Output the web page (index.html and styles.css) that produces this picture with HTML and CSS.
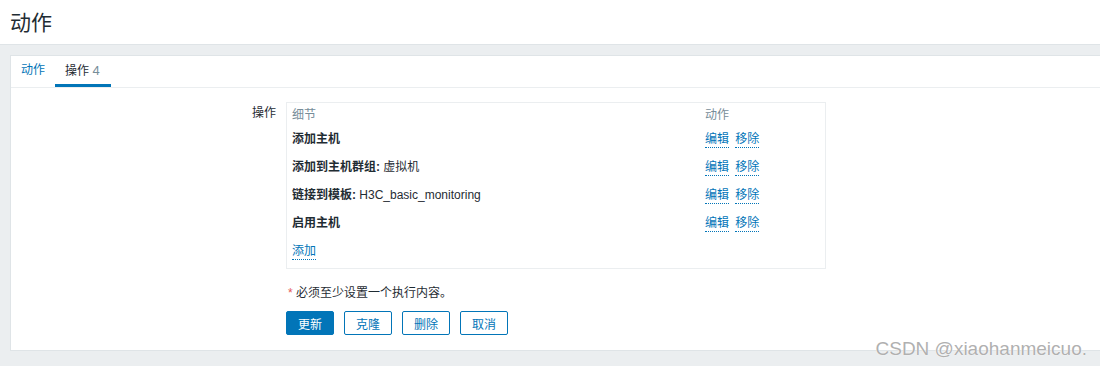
FILE: index.html
```html
<!DOCTYPE html>
<html lang="zh">
<head>
<meta charset="utf-8">
<title>动作</title>
<link rel="stylesheet" href="styles.css">
</head>
<body>
<header class="page-header">
  <h1 class="page-title">动作</h1>
</header>
<main class="content">
  <section class="card">
    <ul class="tabs">
      <li class="tab"><a class="tab-link">动作</a></li>
      <li class="tab tab-active"><span>操作</span> <span class="tab-count">4</span></li>
    </ul>
    <div class="form">
      <div class="form-label">操作</div>
      <div class="form-field">
        <div class="ops-table">
          <div class="ops-head">
            <span>细节</span>
            <span>动作</span>
          </div>
          <div class="ops-row">
            <span class="ops-detail"><b>添加主机</b></span>
            <span class="ops-actions"><a class="link">编辑</a> <a class="link">移除</a></span>
          </div>
          <div class="ops-row">
            <span class="ops-detail"><b>添加到主机群组:</b> 虚拟机</span>
            <span class="ops-actions"><a class="link">编辑</a> <a class="link">移除</a></span>
          </div>
          <div class="ops-row">
            <span class="ops-detail"><b>链接到模板:</b> H3C_basic_monitoring</span>
            <span class="ops-actions"><a class="link">编辑</a> <a class="link">移除</a></span>
          </div>
          <div class="ops-row">
            <span class="ops-detail"><b>启用主机</b></span>
            <span class="ops-actions"><a class="link">编辑</a> <a class="link">移除</a></span>
          </div>
          <div class="ops-row">
            <span class="ops-detail"><a class="link">添加</a></span>
          </div>
        </div>
      </div>
      <div class="form-field form-note"><span class="req">*</span> 必须至少设置一个执行内容。</div>
      <div class="form-field form-buttons">
        <button class="btn btn-primary">更新</button>
        <button class="btn">克隆</button>
        <button class="btn">删除</button>
        <button class="btn">取消</button>
      </div>
    </div>
  </section>
</main>
<div class="watermark">CSDN @xiaohanmeicuo.</div>
</body>
</html>
```
FILE: styles.css
```css
* { box-sizing: border-box; }
html, body { margin: 0; padding: 0; }
body {
  width: 1100px;
  height: 366px;
  overflow: hidden;
  background: #ebeef0;
  font-family: "Liberation Sans", Arial, "Noto Sans CJK SC", sans-serif;
  font-size: 12px;
  color: #1f2c33;
  position: relative;
}
.page-header {
  background: #fff;
  height: 45px;
  border-bottom: 1px solid #dfe4e7;
  padding: 0 10px;
}
.page-title {
  margin: 0;
  font-weight: normal;
  font-size: 21px;
  line-height: 42px;
  font-family: "Noto Sans CJK SC", sans-serif;
  color: #1f2c33;
}
.content {
  padding: 10px 0 0 10px;
}
.card {
  background: #fff;
  border: 1px solid #dfe4e7;
  border-right: none;
  height: 296px;
  margin-right: -10px;
}
.tabs {
  list-style: none;
  margin: 0;
  padding: 0;
  display: flex;
  height: 32px;
  border-bottom: 1px solid #ebeef0;
}
.tab {
  padding: 0 10px;
  height: 31px;
  line-height: 29px;
  color: #0275b8;
}
.tab-link { color: #0275b8; }
.tab-active {
  color: #1f2c33;
  border-bottom: 3px solid #0275b8;
  padding-right: 11px;
}
.tab-count { color: #768d99; font-size: 13px; }
.form {
  display: grid;
  grid-template-columns: 265px 540px;
  column-gap: 10px;
  padding-top: 14px;
}
.form-label {
  text-align: right;
  padding-top: 4px;
  line-height: 14px;
}
.form-field { grid-column: 2; }
.ops-table {
  border: 1px solid #ebeef0;
  padding: 5px 5px 3px 5px;
}
.ops-head, .ops-row {
  display: grid;
  grid-template-columns: 413px auto;
}
.ops-head {
  line-height: 14px;
  color: #768d99;
  margin-bottom: 3px;
}
.ops-row {
  height: 28px;
  line-height: 28px;
}
.ops-detail b { font-weight: bold; }
.ops-actions { word-spacing: 3px; }
.link {
  color: #0275b8;
  text-decoration: none;
  border-bottom: 1px dotted #0275b8;
  padding-bottom: 1px;
  word-spacing: 0;
}
.form-note {
  margin-top: 17px;
  line-height: 14px;
  padding-left: 2px;
}
.req { color: #e45959; }
.form-buttons {
  margin-top: 11px;
  display: flex;
  gap: 10px;
}
.btn {
  height: 24px;
  padding: 0 11px;
  font-family: "Liberation Sans", Arial, "Noto Sans CJK SC", sans-serif;
  font-size: 12px;
  background: #fff;
  color: #0275b8;
  border: 1px solid #0275b8;
  border-radius: 2px;
  cursor: pointer;
}
.btn-primary {
  background: #0275b8;
  color: #fff;
}
.watermark {
  position: absolute;
  right: 13px;
  bottom: 6px;
  font-family: "Liberation Sans", Arial, sans-serif;
  font-size: 19px;
  line-height: 22px;
  color: #b0b0b0;
  text-shadow: 0 0 1px #fff, 0 0 1px #fff;
}
```
